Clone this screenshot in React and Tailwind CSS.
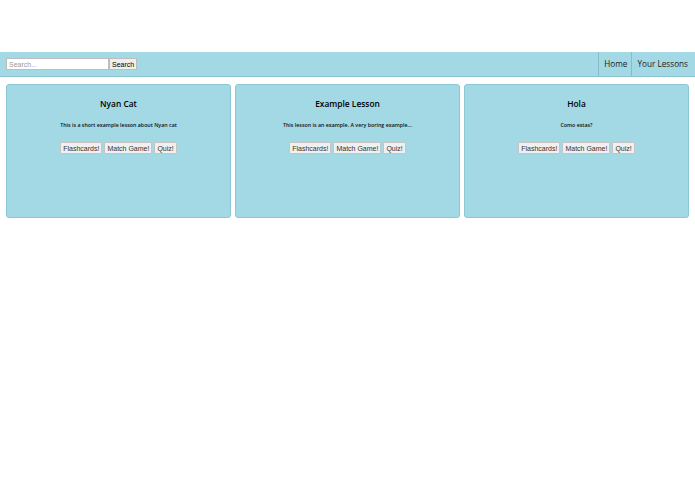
export default function App() {
  const lessons = [
    { title: "Nyan Cat", desc: "This is a short example lesson about Nyan cat" },
    { title: "Example Lesson", desc: "This lesson is an example. A very boring example..." },
    { title: "Hola", desc: "Como estas?" },
  ];
  return (
    <div className="w-[695px] h-[494px] bg-white font-['Open_Sans',sans-serif]">
      <div className="h-[52px]" />
      <nav className="h-[25px] flex items-stretch bg-[#a3d9e5] border-b border-[#8cc3d0]">
        <div className="flex items-center pl-[6px]">
          <input
            placeholder="Search..."
            className="w-[103px] h-[12px] bg-white border border-[#bdbdbd] px-[2px] text-[7px] font-['Liberation_Sans',sans-serif] text-black placeholder:text-[#9a9a9a] outline-none"
          />
          <button className="h-[12px] px-[2px] bg-[#efefef] border border-[#bdbdbd] text-[7px] leading-none font-['Liberation_Sans',sans-serif] text-black">
            Search
          </button>
        </div>
        <div className="flex-1" />
        <a className="flex items-center pl-[5px] pr-[4px] border-l border-[#88bccb] text-[8.2px] text-[#222]">Home</a>
        <a className="flex items-center pl-[5px] pr-[7px] border-l border-[#88bccb] text-[8.2px] text-[#222]">Your Lessons</a>
      </nav>
      <main className="flex gap-[4px] px-[6px] pt-[7px]">
        {lessons.map((l) => (
          <div
            key={l.title}
            className="flex-1 h-[134px] bg-[#a3d9e5] border border-[#8cc7d4] rounded-[3px] flex flex-col items-center pt-[13px]"
          >
            <h2 className="text-[8.4px] font-semibold text-black leading-[12px]">{l.title}</h2>
            <p className="mt-[12px] text-[5.3px] font-semibold text-[#111] leading-[7px]">{l.desc}</p>
            <div className="mt-[13px] flex gap-[2px]">
              {["Flashcards!", "Match Game!", "Quiz!"].map((b) => (
                <button
                  key={b}
                  className="h-[12px] px-[2px] bg-[#f0f0f0] border border-[#c4c4c4] rounded-[1px] text-[7px] leading-none font-['Liberation_Sans',sans-serif] text-[#333]"
                >
                  {b}
                </button>
              ))}
            </div>
          </div>
        ))}
      </main>
    </div>
  );
}
